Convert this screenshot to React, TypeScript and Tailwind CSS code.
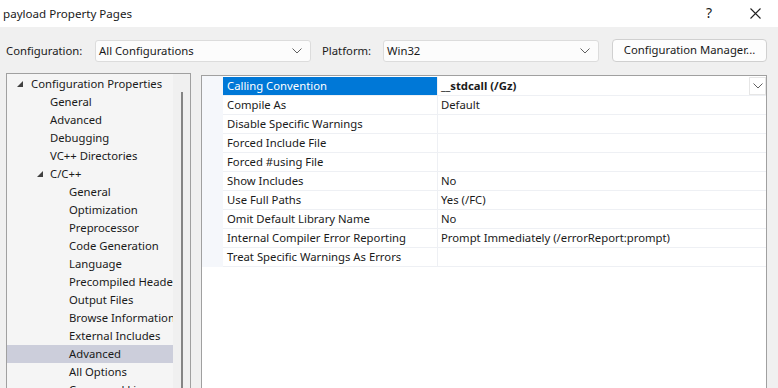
import React from "react";

const Chevron = ({ className = "" }: { className?: string }) => (
  <svg width="10" height="6" viewBox="0 0 10 6" className={className}>
    <polyline points="0.5,0.5 5,5 9.5,0.5" fill="none" stroke="#606060" strokeWidth="1" />
  </svg>
);

const Tri = () => (
  <svg width="6" height="6" viewBox="0 0 6 6">
    <polygon points="6,0 6,6 0,6" fill="#404040" />
  </svg>
);

type TreeItem = { label: string; level: number; expanded?: boolean; selected?: boolean };

const tree: TreeItem[] = [
  { label: "Configuration Properties", level: 0, expanded: true },
  { label: "General", level: 1 },
  { label: "Advanced", level: 1 },
  { label: "Debugging", level: 1 },
  { label: "VC++ Directories", level: 1 },
  { label: "C/C++", level: 1, expanded: true },
  { label: "General", level: 2 },
  { label: "Optimization", level: 2 },
  { label: "Preprocessor", level: 2 },
  { label: "Code Generation", level: 2 },
  { label: "Language", level: 2 },
  { label: "Precompiled Headers", level: 2 },
  { label: "Output Files", level: 2 },
  { label: "Browse Information", level: 2 },
  { label: "External Includes", level: 2 },
  { label: "Advanced", level: 2, selected: true },
  { label: "All Options", level: 2 },
  { label: "Command Line", level: 2 },
];

const props: [string, string][] = [
  ["Calling Convention", "__stdcall (/Gz)"],
  ["Compile As", "Default"],
  ["Disable Specific Warnings", ""],
  ["Forced Include File", ""],
  ["Forced #using File", ""],
  ["Show Includes", "No"],
  ["Use Full Paths", "Yes (/FC)"],
  ["Omit Default Library Name", "No"],
  ["Internal Compiler Error Reporting", "Prompt Immediately (/errorReport:prompt)"],
  ["Treat Specific Warnings As Errors", ""],
];

export default function App() {
  return (
    <div
      className="w-[778px] h-[388px] overflow-hidden bg-[#f0f0f0] flex flex-col text-[11.3px] text-[#1a1a1a]"
      style={{ fontFamily: '"Noto Sans", "Liberation Sans", sans-serif' }}
    >
      {/* title bar */}
      <div className="h-[27px] shrink-0 bg-white flex items-center justify-between pl-[3px]">
        <span className="text-[11.6px] leading-none">payload Property Pages</span>
        <div className="flex items-center h-full">
          <span className="w-[46px] text-center text-[14px] leading-none -mt-[1px]">?</span>
          <span className="w-[46px] flex justify-center -mt-[1px]">
            <svg width="11" height="11" viewBox="0 0 11 11">
              <path d="M0.5 0.5 L10.5 10.5 M10.5 0.5 L0.5 10.5" stroke="#222" strokeWidth="1.1" fill="none" />
            </svg>
          </span>
        </div>
      </div>

      {/* config row */}
      <div className="h-[46px] shrink-0 flex items-start pt-[13px]">
        <span className="ml-[6px] w-[89px] leading-[21px]">Configuration:</span>
        <div className="w-[216px] h-[22px] bg-[#fcfcfc] border border-[#dcdcdc] rounded-[3px] flex items-center justify-between pl-[3px] pr-[8px]">
          <span>All Configurations</span>
          <Chevron />
        </div>
        <span className="ml-[11px] w-[61px] leading-[21px]">Platform:</span>
        <div className="w-[216px] h-[22px] bg-[#fcfcfc] border border-[#dcdcdc] rounded-[3px] flex items-center justify-between pl-[3px] pr-[8px]">
          <span>Win32</span>
          <Chevron />
        </div>
        <div className="ml-[13px] w-[155px] h-[23px] -mt-[1px] bg-[#fdfdfd] border border-[#d0d0d0] rounded-[4px] flex items-center justify-center">
          Configuration Manager...
        </div>
      </div>

      {/* main area */}
      <div className="flex items-start flex-1 pl-[6px]">
        {/* tree panel */}
        <div className="w-[185px] h-[330px] border border-[#a0a0a0] bg-[#f5f5f5] flex">
          <div className="w-[166px] pt-[1px] overflow-hidden">
            {tree.map((t, i) => (
              <div
                key={i}
                className={`h-[18px] flex items-center whitespace-nowrap ${t.selected ? "bg-[#cccedb]" : ""}`}
              >
                {t.level === 0 && (
                  <span className="ml-[10px] w-[14px] flex"><Tri /></span>
                )}
                {t.level === 1 && t.expanded && (
                  <span className="ml-[30px] w-[13px] flex"><Tri /></span>
                )}
                {t.level === 1 && !t.expanded && <span className="ml-[43px]" />}
                {t.level === 2 && <span className="ml-[62px]" />}
                <span>{t.label}</span>
              </div>
            ))}
          </div>
          <div className="w-[17px] bg-[#f0f0f0] flex justify-center pt-[18px]">
            <div className="w-[2px] h-full bg-[#858585]" />
          </div>
        </div>

        {/* property grid */}
        <div className="ml-[10px] mt-[2px] w-[566px] h-[320px] border border-[#a0a0a0] bg-white flex flex-col">
          <div className="flex">
            <div className="w-[21px] bg-[#f5f7fb]" />
            <div className="flex-1 pt-[1px]">
              {props.map(([name, value], i) => {
                const sel = i === 0;
                return (
                  <div key={i} className="h-[19px] flex border-b border-[#eef0f4]">
                    <div
                      className={`w-[214px] pl-[4px] flex items-center whitespace-nowrap ${sel ? "bg-[#0078d7] text-white" : ""}`}
                    >
                      {name}
                    </div>
                    <div className="w-[1px] bg-[#eef0f4]" />
                    <div className={`flex-1 pl-[3px] flex items-center justify-between whitespace-nowrap ${sel ? "font-bold" : ""}`}>
                      <span>{value}</span>
                      {sel && (
                        <div className="w-[17px] h-[18px] bg-white border border-[#e6e6e6] flex items-center justify-center">
                          <Chevron />
                        </div>
                      )}
                    </div>
                  </div>
                );
              })}
            </div>
          </div>
        </div>
      </div>
    </div>
  );
}
